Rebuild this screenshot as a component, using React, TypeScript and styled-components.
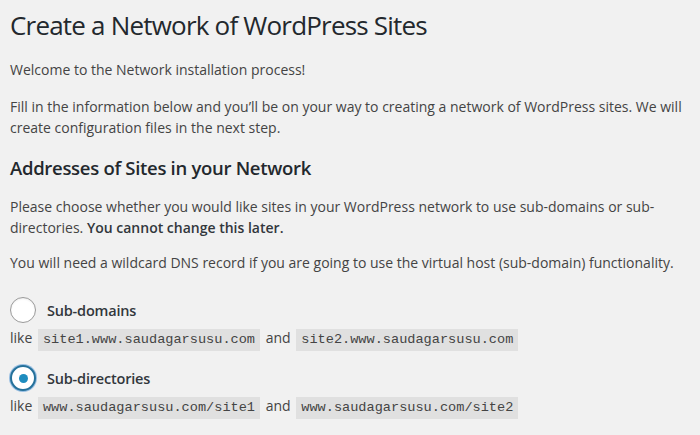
import React from "react";
import styled, { createGlobalStyle } from "styled-components";

const GlobalStyle = createGlobalStyle`
  html, body {
    margin: 0;
    padding: 0;
    background: #f1f1f1;
  }
  body {
    font-family: "Open Sans", "Noto Sans", Arial, sans-serif;
    color: #444;
  }
`;

const Page = styled.div`
  padding: 0 10px 20px 10px;
  width: 700px;
  box-sizing: border-box;
  height: 435px;
  overflow: hidden;
`;

const Title = styled.h1`
  margin: 8px 0 0;
  font-size: 26px;
  line-height: 34px;
  font-weight: 400;
  color: #23282d;
  letter-spacing: -0.8px;
`;

const Para = styled.p<{ $top: number }>`
  margin: ${({ $top }) => $top}px 0 0;
  font-size: 14px;
  line-height: 21px;

  strong {
    font-weight: 600;
    color: #32373c;
  }
`;

const SubHeading = styled.h2`
  margin: 18px 0 0;
  font-size: 18.5px;
  line-height: 23px;
  font-weight: 600;
  color: #23282d;
  letter-spacing: -0.3px;
`;

const Options = styled.div`
  margin-top: 24px;
  display: flex;
  flex-direction: column;
  gap: 14px;
`;

const Option = styled.div`
  display: flex;
  flex-direction: column;
  gap: 4px;
`;

const RadioRow = styled.label`
  display: flex;
  align-items: center;
  gap: 11px;
  height: 26px;
  font-size: 14.5px;
  font-weight: 600;
  color: #32373c;
  letter-spacing: -0.2px;
`;

const Radio = styled.span<{ $checked?: boolean }>`
  width: 26px;
  height: 26px;
  box-sizing: border-box;
  border-radius: 50%;
  background: #fff;
  border: ${({ $checked }) => ($checked ? "2px solid #25719a" : "1px solid #9a9a9a")};
  box-shadow: ${({ $checked }) =>
    $checked ? "0 0 0 1px rgba(91,157,217,0.6)" : "inset 0 1px 2px rgba(0,0,0,0.07)"};
  display: flex;
  align-items: center;
  justify-content: center;

  &::after {
    content: "";
    display: ${({ $checked }) => ($checked ? "block" : "none")};
    width: 9px;
    height: 9px;
    border-radius: 50%;
    background: #1e8cbe;
  }
`;

const Example = styled.div`
  font-size: 14px;
  line-height: 22px;
  color: #444;
`;

const Code = styled.code`
  display: inline-block;
  font-family: "Liberation Mono", "DejaVu Sans Mono", monospace;
  font-size: 13.6px;
  line-height: 22px;
  padding: 0 5px;
  margin: 0 2px;
  background: rgba(0, 0, 0, 0.065);
  color: #444;
`;

const choices = [
  {
    label: "Sub-domains",
    checked: false,
    a: "site1.www.saudagarsusu.com",
    b: "site2.www.saudagarsusu.com",
  },
  {
    label: "Sub-directories",
    checked: true,
    a: "www.saudagarsusu.com/site1",
    b: "www.saudagarsusu.com/site2",
  },
];

export default function App() {
  return (
    <>
      <GlobalStyle />
      <Page>
        <Title>Create a Network of WordPress Sites</Title>
        <Para $top={17}>Welcome to the Network installation process!</Para>
        <Para $top={16}>
          Fill in the information below and you’ll be on your way to creating a network of
          WordPress sites. We will create configuration files in the next step.
        </Para>
        <SubHeading>Addresses of Sites in your Network</SubHeading>
        <Para $top={17}>
          Please choose whether you would like sites in your WordPress network to use
          sub-domains or sub-
          <br />
          directories. <strong>You cannot change this later.</strong>
        </Para>
        <Para $top={14}>
          You will need a wildcard DNS record if you are going to use the virtual host
          (sub-domain) functionality.
        </Para>
        <Options>
          {choices.map((c) => (
            <Option key={c.label}>
              <RadioRow>
                <Radio $checked={c.checked} />
                {c.label}
              </RadioRow>
              <Example>
                like <Code>{c.a}</Code> and <Code>{c.b}</Code>
              </Example>
            </Option>
          ))}
        </Options>
      </Page>
    </>
  );
}
